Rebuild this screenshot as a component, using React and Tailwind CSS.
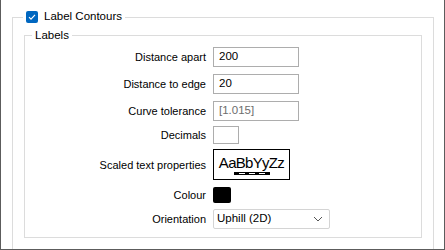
// App.jsx
const FONT = { fontFamily: '"Liberation Sans", Arial, sans-serif' };

const Row = ({ label, className = "", children }) => (
  <div className={`flex items-center ${className}`}>
    <div className="w-[188px] text-right pr-[7px] text-[11px] leading-[16px] text-black">
      {label}
    </div>
    {children}
  </div>
);

const TextBox = ({ value, muted, width = "w-[86px]" }) => (
  <div
    className={`${width} h-[20px] border border-[#adadad] bg-white flex items-center px-[5px] text-[11.5px] ${
      muted ? "text-[#6d6d6d]" : "text-black"
    }`}
  >
    {value}
  </div>
);

export default function App() {
  return (
    <div
      className="w-[445px] h-[250px] bg-white border-l border-r border-b border-[#5c5c5c] overflow-hidden"
      style={FONT}
    >
      <fieldset className="ml-[11px] mr-[10px] mt-[9px] border border-[#dcdcdc] h-[260px] pt-0">
        <legend className="ml-[10px] px-[3px] flex items-center gap-[6px] h-[16px] text-[11.5px] text-black">
          <span className="w-[12px] h-[12px] rounded-[2px] bg-[#0067c0] flex items-center justify-center">
            <svg width="8" height="8" viewBox="0 0 8 8">
              <path d="M1 4.2 L3 6.2 L7 1.8" fill="none" stroke="white" strokeWidth="1.1" />
            </svg>
          </span>
          Label Contours
        </legend>

        <fieldset className="ml-[11px] mr-[11px] mt-[2px] border border-[#dcdcdc] pb-[8px]">
          <legend className="ml-[7px] px-[3px] h-[16px] leading-[16px] text-[11.5px] text-black">
            Labels
          </legend>

          <div className="flex flex-col pt-[4px]">
            <Row label="Distance apart">
              <TextBox value="200" />
            </Row>
            <Row label="Distance to edge" className="mt-[7px]">
              <TextBox value="20" />
            </Row>
            <Row label="Curve tolerance" className="mt-[7px]">
              <TextBox value="[1.015]" muted />
            </Row>
            <Row label="Decimals" className="mt-[5px]">
              <div className="w-[26px] h-[18px] border border-[#adadad] bg-white" />
            </Row>
            <Row label="Scaled text properties" className="mt-[5px]">
              <div className="w-[77px] h-[31px] border-[1.5px] border-black bg-white flex flex-col items-center justify-center">
                <span className="text-[15px] leading-[17px] tracking-[-0.7px] text-black">AaBbYyZz</span>
                <span className="mt-[1px] w-[36px] h-[3px] bg-black flex items-center justify-around px-[3px]">
                  <span className="w-[6px] h-[1px] bg-white" />
                  <span className="w-[6px] h-[1px] bg-white" />
                  <span className="w-[6px] h-[1px] bg-white" />
                </span>
              </div>
            </Row>
            <Row label="Colour" className="mt-[7px]">
              <div className="w-[18px] h-[16px] rounded-[2px] bg-black" />
            </Row>
            <Row label="Orientation" className="mt-[6px]">
              <div className="w-[117px] h-[20px] border border-[#d4d4d4] rounded-[2px] bg-white flex items-center justify-between pl-[3px] pr-[6px] text-[11.5px] text-black">
                <span>Uphill (2D)</span>
                <svg width="10" height="6" viewBox="0 0 10 6">
                  <path d="M1 1 L5 5 L9 1" fill="none" stroke="#555" strokeWidth="1" />
                </svg>
              </div>
            </Row>
          </div>
        </fieldset>
      </fieldset>
    </div>
  );
}
